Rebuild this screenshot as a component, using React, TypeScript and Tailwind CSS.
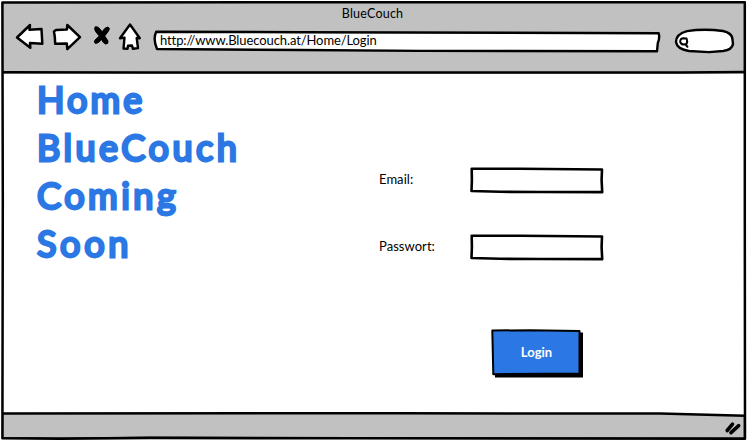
const ink = { stroke: "#000", strokeLinejoin: "round", strokeLinecap: "round" } as const;

function Toolbar() {
  return (
    <header className="relative h-[74px] shrink-0 bg-[#c1c1c1]">
      <div className="flex h-[28px] justify-center pt-[5px] pr-[2px] text-[12.5px] leading-[17px] tracking-[0.2px]">
        BlueCouch
      </div>
      <div className="flex h-[30px] -mt-[6px] items-start pl-[15px]">
        <svg width="29" height="28" viewBox="15 22 29 28" className="shrink-0" {...ink} fill="#fff" strokeWidth="2.5">
          <path d="M17 37.5 30 25 29.5 29.8 41.5 29 42.3 43.7 30 42.9 30.3 47.8Z" />
        </svg>
        <svg width="30" height="30" viewBox="52 22 30 30" className="ml-[8px] shrink-0" {...ink} fill="#fff" strokeWidth="2.5">
          <path d="M54 31.5 56 30 67 29.5 67.3 25 80 37.2 67.3 49.2 66.8 43.5 55.2 43.7 54.8 37Z" />
        </svg>
        <svg width="20" height="23" viewBox="92 24 20 23" className="mt-[2px] ml-[10px] shrink-0" strokeLinejoin="round" stroke="#000" strokeWidth="1">
          <path d="M95.2 26.8Q98 26 100.5 29.5L102 32Q105 27 108 27Q110.5 28 108.5 31L104.7 36L108 41Q108.5 44.5 105.5 44Q103 43 101.5 39.5Q98.5 43.5 95.5 43.5Q93.5 42.5 95 40L99.3 36L95.5 31.5Q94 28.5 95.2 26.8Z" />
        </svg>
        <svg width="24" height="30" viewBox="118 22 24 30" className="ml-[6px] shrink-0" {...ink} fill="#fff" strokeWidth="2.4">
          <path d="M130 24.5 120 38.2 124.5 37.6 123.5 48.6 127.5 48.8 128 45.7 132 45.5 133 48.8 138 48.1 136.7 38 139.8 38.2Z" />
        </svg>
        <div className="relative mt-[8px] ml-[11px] h-[23px] w-[508px] shrink-0">
          <svg width="508" height="23" viewBox="153 30 508 23" className="absolute inset-0" {...ink} fill="#fff" strokeWidth="2.4">
            <path d="M156.2 31.7 300 32.2 658.7 33.2Q660 38 657.8 43L657 51.3 420 50.9 300 50 157 49Q152.7 39 156.2 31.7Z" />
          </svg>
          <div className="relative pt-[2px] pl-[7px] text-[13px] leading-[17px] tracking-[-0.1px] whitespace-nowrap">
            http://www.Bluecouch.at/Home/Login
          </div>
        </div>
        <svg width="62" height="27" viewBox="674 28 62 27" className="mt-[6px] ml-[13px] shrink-0" {...ink} fill="#fff" strokeWidth="2.4">
          <path d="M687 31.1Q704 28.6 723 31Q732 33 732.4 39L733 44Q732 50 723 51L709 52.1 689 51Q677 49 676 42Q676 34 687 31.1Z" />
          <path d="M680.2 42Q680 38.3 683.5 38.3L686.6 38.5Q687.8 41.5 686.5 44Q682 45.8 680.2 42ZM685.5 44.3 687.5 46.8" strokeWidth="2" />
        </svg>
      </div>
      <svg width="747" height="6" viewBox="0 69 747 6" className="absolute bottom-[-1px] left-0" {...ink} fill="none" strokeWidth="2.5">
        <path d="M2 72.2 145 72.6 680 72.6 745 72" />
      </svg>
    </header>
  );
}

function Field({ label }: { label: string }) {
  return (
    <label className="flex h-[27px] items-start">
      <span className="w-[90px] shrink-0 pt-[4px] text-[13px] leading-[17px] tracking-[0.05px]">{label}:</span>
      <svg width="135" height="27" viewBox="469 167 135 27" {...ink} fill="#fff" strokeWidth="2.6">
        <path d="M471.7 168.8 520 168.8 602 169.5 601.6 180 602.2 192.1 540 192 500 191.8 471.5 191 471.9 180Z" />
      </svg>
    </label>
  );
}

export default function App() {
  return (
    <div className="relative flex h-[441px] w-[747px] flex-col overflow-hidden bg-white font-['Lato','Liberation_Sans',sans-serif] text-black">
      <Toolbar />
      <main className="flex h-[338px] shrink-0">
        <nav className="w-[379px] shrink-0 pt-[1px] pl-[37px] text-[36px] leading-[48px] text-[#2b78e4] [-webkit-text-stroke:2.8px_#2b78e4]">
          <div className="tracking-[3.1px]">Home</div>
          <div className="tracking-[3.5px]">BlueCouch</div>
          <div className="tracking-[3.5px]">Coming</div>
          <div className="tracking-[3.7px]">Soon</div>
        </nav>
        <form className="pt-[93px]">
          <Field label="Email" />
          <div className="h-[40px]" />
          <Field label="Passwort" />
          <button type="button" className="relative mt-[68px] ml-[112px] block h-[49px] w-[93px] text-[13px] font-bold text-white">
            <svg width="93" height="49" viewBox="491 329 93 49" className="absolute inset-0" {...ink}>
              <path d="M495 332.5H583V377.5H495Z" fill="#000" stroke="none" />
              <path d="M492.3 330.5 530 330.2 579.5 331 579.5 373.5 493.3 374.2Z" fill="#2b78e4" strokeWidth="2" />
            </svg>
            <span className="relative block h-[49px] w-[91px] text-center leading-[47px]">Login</span>
          </button>
        </form>
      </main>
      <footer className="relative h-[29px] shrink-0">
        <svg width="747" height="30" viewBox="0 411 747 30" className="absolute top-[-1px] left-0" {...ink} fill="#c1c1c1" strokeWidth="2.5">
          <path d="M2 413.5 400 413.3 660 413.5 745 415.8 745 438.7 350 438.2 150 437.8 60 438.7 2 438.3Z" />
          <path d="M727.2 430.5 732.5 424.2M731 432.7 738.7 425.7" strokeWidth="3.6" />
        </svg>
      </footer>
      <svg width="747" height="441" viewBox="0 0 747 441" className="pointer-events-none absolute inset-0" {...ink} fill="none" strokeWidth="2.5">
        <path d="M0 0H747V441H0V0M2 2V438.5L350 438.2 745 438.7V2Z" fill="#fff" fillRule="evenodd" stroke="none" />
        <path d="M2.4 2.4 350 2.2 744.8 2.2 744.8 220 745 438.7 520 438.4 350 438.2 150 438.1 60 438.7 2.4 438.3 2.8 200Z" />
      </svg>
    </div>
  );
}
